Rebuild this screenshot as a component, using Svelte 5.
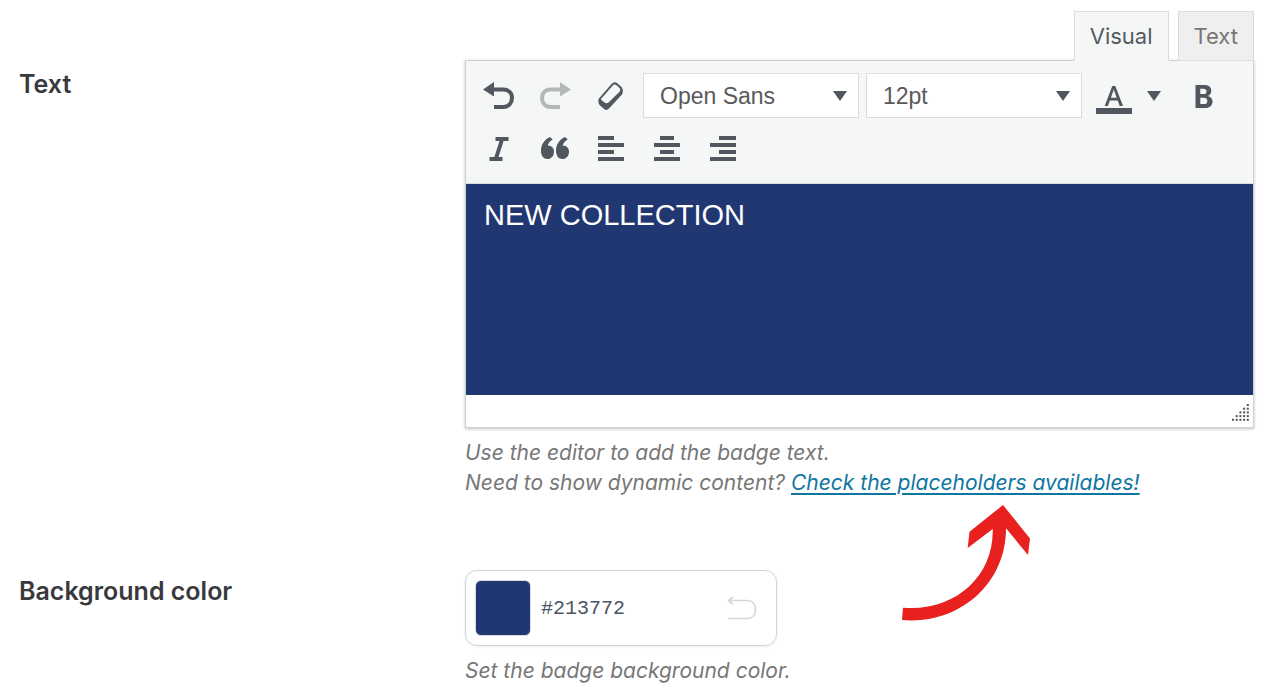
<script>
  let mode = $state('visual');
  let font = $state('Open Sans');
  let size = $state('12pt');
  let text = $state('NEW COLLECTION');
  let color = $state('#213772');

  const aligns = [
    { name: 'Align left', d: 'M0 2H16M0 9H26M0 16H16M0 23H26' },
    { name: 'Align center', d: 'M6 2H20M0 9H26M6 16H20M0 23H26' },
    { name: 'Align right', d: 'M9 2H26M0 9H26M9 16H26M0 23H26' }
  ];
</script>

<main class="form">
  <section class="row text-row">
    <label class="name" for="badge-text">Text</label>
    <div class="field">
      <div class="tabs">
        <button class="tab" class:active={mode === 'visual'} onclick={() => (mode = 'visual')}>Visual</button>
        <button class="tab" class:active={mode === 'text'} onclick={() => (mode = 'text')}>Text</button>
      </div>
      <div class="editor">
        <div class="toolbar">
          <div class="tools">
            <button class="tool" aria-label="Undo">
              <svg width="32" height="28" viewBox="0 0 32 28">
                <path d="M0 7.500L11 0V14.500Z" fill="currentColor" />
                <path d="M10 7.500H20.500C25.500 7.500 29 11 29 16S25.500 25 20.500 25H11" fill="none" stroke="currentColor" stroke-width="4" />
              </svg>
            </button>
            <button class="tool" aria-label="Redo" disabled>
              <svg width="32" height="28" viewBox="0 0 32 28">
                <path d="M32 7.500L21 0V14.500Z" fill="currentColor" />
                <path d="M22 7.500H11.500C6.500 7.500 3 11 3 16S6.500 25 11.500 25H21" fill="none" stroke="currentColor" stroke-width="4" />
              </svg>
            </button>
            <button class="tool" aria-label="Clear formatting">
              <svg width="26" height="28" viewBox="0 0 26 28">
                <path d="M0.500 17L13.500 2Q16.500 -1 19.500 1.500L23.500 5Q26 8 24 12.500L11 26.500Q8.500 29 6 27L1.500 23Q0 21 0.500 17Z" fill="currentColor" />
                <path d="M3 17L14.500 3.800Q16.500 1.600 18.800 3.400L21.300 5.700Q23.200 7.800 21.300 10L10.500 20.500Q8.500 22 6.500 20.500L4 18.500Q2.600 17.800 3 17Z" fill="#f5f7f7" />
              </svg>
            </button>
            <div class="pick">
              <select aria-label="Font family" bind:value={font}>
                <option>Open Sans</option>
                <option>Arial</option>
              </select>
              <svg width="14" height="10" viewBox="0 0 14 10"><path d="M0 0H14L7 10Z" fill="currentColor" /></svg>
            </div>
            <div class="pick">
              <select aria-label="Font size" bind:value={size}>
                <option>12pt</option>
                <option>14pt</option>
              </select>
              <svg width="14" height="10" viewBox="0 0 14 10"><path d="M0 0H14L7 10Z" fill="currentColor" /></svg>
            </div>
            <button class="tool color-tool" aria-label="Text color">
              <svg width="36" height="36" viewBox="0 0 36 36">
                <path transform="translate(0 5)" d="M8.700 23L16.300 3H19.300L27 23H23.700L21.700 17.500H13.900L11.900 23ZM14.900 14.800H20.700L17.800 6.500Z" fill="currentColor" />
                <path d="M0 30H36V36H0Z" fill="currentColor" />
              </svg>
              <svg width="14" height="10" viewBox="0 0 14 10"><path d="M0 0H14L7 10Z" fill="currentColor" /></svg>
            </button>
            <button class="tool bold-tool" aria-label="Bold">
              <svg width="18" height="24" viewBox="0 0 18 24">
                <path fill-rule="evenodd" d="M0.500 1H8.500C13.800 1 16.300 3 16.300 6.800C16.300 9.300 15 11.300 12.800 11.900C15.800 12.500 17.500 14.500 17.500 17.400C17.500 21.600 14.500 24 9.500 24H0.500ZM5.300 4.800V10H8.300C10.500 10 11.500 9.100 11.500 7.400C11.500 5.600 10.400 4.800 8.200 4.800ZM5.300 13.700V20.100H8.700C11.100 20.100 12.300 19 12.300 16.900C12.300 14.700 11.100 13.700 8.600 13.700Z" fill="currentColor" />
              </svg>
            </button>
          </div>
          <div class="tools">
            <button class="tool" aria-label="Italic">
              <svg width="20" height="24" viewBox="0 0 20 24">
                <path d="M6.500 2H19.500M0.500 22H13.500M13.200 2L6.800 22" fill="none" stroke="currentColor" stroke-width="4" />
              </svg>
            </button>
            <button class="tool" aria-label="Blockquote">
              <svg width="28" height="23" viewBox="0 1 28 23">
                <path d="M9 1L11.700 3.500C8.500 5.500 7 7.500 6.800 9.800C10.500 9.300 13 12 13 15.700C13 20 10.200 23 6.500 23C2.500 23 0 19.800 0 14.500C0 8.500 3.500 3.500 9 1Z" fill="currentColor" />
                <path d="M24 1L26.700 3.500C23.500 5.500 22 7.500 21.800 9.800C25.500 9.300 28 12 28 15.700C28 20 25.200 23 21.500 23C17.500 23 15 19.800 15 14.500C15 8.500 18.500 3.500 24 1Z" fill="currentColor" />
              </svg>
            </button>
            {#each aligns as align}
              <button class="tool" aria-label={align.name}>
                <svg width="26" height="26" viewBox="0 0 26 26"><path d={align.d} fill="none" stroke="currentColor" stroke-width="3.800" /></svg>
              </button>
            {/each}
          </div>
        </div>
        <textarea id="badge-text" bind:value={text} style:background-color={color} spellcheck="false"></textarea>
        <div class="status">
          <svg width="17" height="17" viewBox="0 0 17 17" aria-hidden="true">
            {#each [0, 1, 2, 3, 4] as r}
              {#each [0, 1, 2, 3, 4] as c}
                {#if r + c >= 4}
                  <rect x={c * 3.7} y={r * 3.7} width="2" height="2" fill="#555" />
                {/if}
              {/each}
            {/each}
          </svg>
        </div>
      </div>
      <p class="hint">
        Use the editor to add the badge text.<br />
        Need to show dynamic content? <a href="#placeholders">Check the placeholders availables!</a>
      </p>
      <svg class="pointer" width="130" height="120" viewBox="901 503 130 120" aria-hidden="true">
        <path d="M903 607.700C954 612 994 577 992.700 529L967.700 548L969.500 531.700L1003 505L1030 538.500L1028 555L1006 528.300C1006 586 957 625 902 620Z" fill="#e8201e" />
      </svg>
    </div>
  </section>

  <section class="row color-row">
    <label class="name" for="badge-color">Background color</label>
    <div class="field">
      <div class="color-box">
        <button class="swatch" style:background-color={color} aria-label="Choose color"></button>
        <input id="badge-color" type="text" bind:value={color} spellcheck="false" />
        <button class="reset" aria-label="Reset color" onclick={() => (color = '#213772')}>
          <svg width="30" height="24" viewBox="0 0 30 24">
            <path d="M6 1L1.500 4.500L6 8.500M1.500 4.500H20.500C25.500 4.500 28.500 8 28.500 13.500S25.500 22.500 20.500 22.500H1" fill="none" stroke="#d5d7d9" stroke-width="1.700" />
          </svg>
        </button>
      </div>
      <p class="hint">Set the badge background color.</p>
    </div>
  </section>
</main>

<style>
  :global(body) {
    margin: 0;
    background: #fff;
  }
  .form {
    padding: 11px 16px 0 19px;
    font-family: Inter, sans-serif;
    font-size: 21px;
    color: #777;
  }
  button,
  input,
  select,
  textarea {
    box-sizing: border-box;
    margin: 0;
    font: inherit;
  }
  svg {
    display: block;
    flex: none;
  }
  .row {
    display: grid;
    grid-template-columns: 446px minmax(0, 1fr);
    align-items: start;
  }
  .color-row {
    margin-top: 72px;
  }
  .name {
    font-size: 25px;
    line-height: 30px;
    font-weight: 600;
    color: #38393d;
  }
  .text-row .name {
    padding-top: 58px;
  }
  .color-row .name {
    padding-top: 6px;
  }
  .field {
    position: relative;
  }
  .tabs {
    display: flex;
    justify-content: flex-end;
    gap: 9px;
  }
  .tab {
    height: 50px;
    margin-bottom: -1px;
    padding: 0 15px;
    border: 1px solid #dcdcde;
    background: #efeff0;
    color: #777;
    font-size: 22px;
    line-height: 48px;
  }
  .tab.active {
    position: relative;
    z-index: 1;
    border-bottom-color: #f5f7f7;
    background: #f5f7f7;
    color: #555a60;
  }
  .editor {
    border: 1px solid #cfd0d2;
    box-shadow: 0 1px 3px rgba(0, 0, 0, 0.25);
  }
  .toolbar {
    display: grid;
    gap: 8px;
    padding: 12px 5px;
    height: 98px;
    background: #f5f7f7;
    color: #50575e;
  }
  .tools {
    display: flex;
    align-items: center;
    height: 45px;
  }
  .tool {
    display: flex;
    flex: none;
    align-items: center;
    justify-content: center;
    width: 56px;
    height: 44px;
    padding: 0;
    border: 0;
    background: none;
    color: inherit;
  }
  .tool:disabled {
    color: #b5b8bb;
  }
  .color-tool {
    width: 86px;
    gap: 15px;
  }
  .bold-tool {
    width: 66px;
  }
  .pick {
    display: grid;
    align-items: center;
    width: 216px;
    margin: 0 3px 0 4px;
  }
  .pick > * {
    grid-area: 1 / 1;
  }
  .pick svg {
    justify-self: end;
    margin-right: 12px;
    pointer-events: none;
  }
  .pick select {
    width: 100%;
    height: 45px;
    padding: 0 16px;
    appearance: none;
    border: 1px solid #dcdcde;
    border-radius: 0;
    background: #fff;
    color: #595959;
    font-family: "Liberation Sans", sans-serif;
    font-size: 23px;
  }
  textarea {
    display: block;
    width: 100%;
    height: 212px;
    padding: 14px 18px;
    border: 0;
    border-top: 1px solid #d8dce4;
    outline: 0;
    resize: none;
    color: #fff;
    font-family: "Liberation Sans", sans-serif;
    font-size: 29px;
    line-height: 34px;
  }
  .status {
    display: flex;
    align-items: flex-end;
    justify-content: flex-end;
    height: 26px;
    padding: 0 4px 6px;
  }
  .hint {
    margin: 10px 0 0;
    font-style: italic;
    line-height: 30px;
  }
  .hint a {
    color: #0f76a2;
    text-underline-offset: 3px;
    text-decoration-thickness: 2px;
  }
  .pointer {
    position: absolute;
    top: 492px;
    left: 436px;
    pointer-events: none;
  }
  .color-box {
    display: flex;
    box-sizing: border-box;
    align-items: center;
    width: 312px;
    height: 76px;
    padding: 0 19px 0 9px;
    border: 1px solid #cdd5db;
    border-radius: 12px;
    box-shadow: 0 1px 3px rgba(0, 0, 0, 0.08);
  }
  .swatch {
    flex: none;
    width: 56px;
    height: 56px;
    border: 1px solid #d8dce6;
    border-radius: 6px;
  }
  .color-box input {
    flex: 1;
    min-width: 0;
    padding: 0 10px;
    border: 0;
    outline: 0;
    background: none;
    color: #4b5563;
    font-family: "Liberation Mono", monospace;
    font-size: 20px;
  }
  .reset {
    padding: 0;
    border: 0;
    background: none;
  }
</style>
